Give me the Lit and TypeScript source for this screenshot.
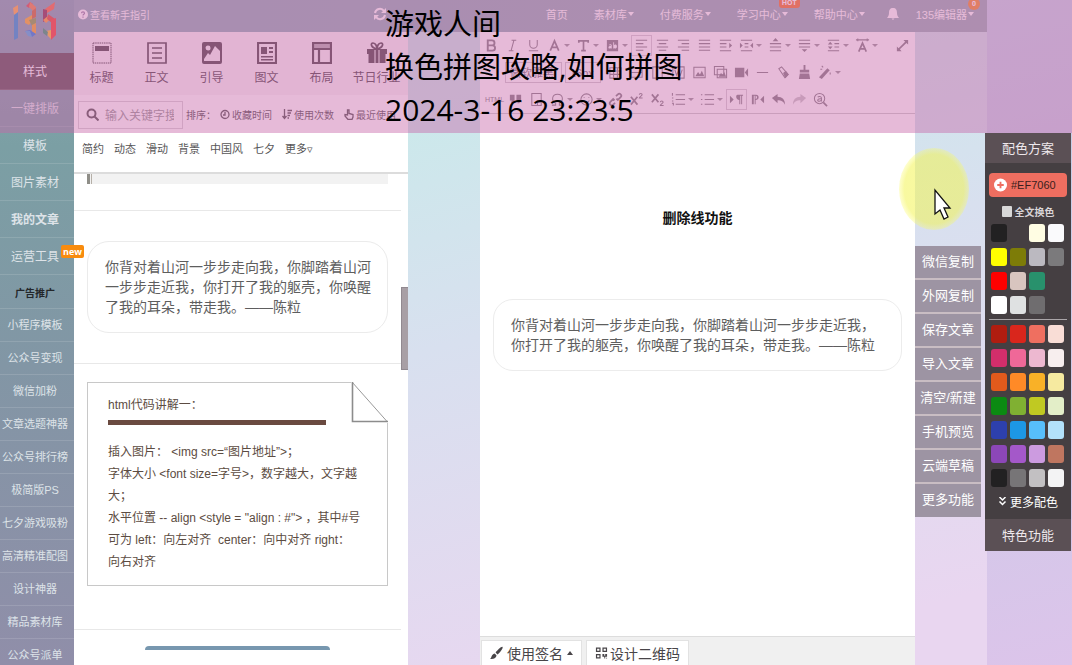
import { LitElement, html, svg, css, nothing } from "lit";
import { customElement, state } from "lit/decorators.js";
import { classMap } from "lit/directives/class-map.js";

const toolGlyphs: Record<string, unknown> = {
  bold: svg`<path d="M4 2.500h4.500a2.700 2.700 0 0 1 0 5.400H4zM4 7.900h5a2.800 2.800 0 0 1 0 5.600H4z" fill="none" stroke="currentColor" stroke-width="2"/>`,
  italic: svg`<path d="M7 2.500h5M4 13.500h5M9.500 2.500l-3 11" class="l"/>`,
  underline: svg`<path d="M4 2v5a4 4 0 0 0 8 0V2M3 13.500h10" class="l"/>`,
  color: svg`<path d="M3.500 13.500L8 3l4.500 10.500M5 10h6" class="l2"/>`,
  type: svg`<path d="M3 5V3h10v2M8 3v10.500M5.500 13.500h5" class="l2"/>`,
  mark: svg`<path fill-rule="evenodd" d="M2 2h12v12H2zM4.200 7v.8h2v.6c-1.500 0-2.500.4-2.500 1.600 0 1.500 2 1.600 2.600.7v.6h.9V8c0-1.600-2.500-1.600-3-.6zM8.800 4.500v6.700h.8v-.6c1 1.200 3.100.6 3.100-1.600s-2-2.600-3-1.500v-3z"/>`,
  left: svg`<path d="M2 2.500h12M2 6h8M2 9.500h12M2 13h8" class="l"/>`,
  center: svg`<path d="M2 2.500h12M4 6h8M2 9.500h12M4 13h8" class="l"/>`,
  right: svg`<path d="M2 2.500h12M6 6h8M2 9.500h12M6 13h8" class="l"/>`,
  justify: svg`<path d="M2 2.500h12M2 6h12M2 9.500h12M2 13h12" class="l"/>`,
  indent: svg`<path d="M2 2.500h12M2 6h7M2 9.500h7M2 13.500h12" class="l"/><path d="M12 5l3 3-3 3z"/>`,
  both: svg`<path d="M2 2.500h12M6 6h4M6 9.500h4M2 13.500h12" class="l"/><path d="M1 5l3 3-3 3zM15 5l-3 3 3 3z"/>`,
  top: svg`<path d="M2 6h12M2 9.500h12M2 13.500h12" class="l"/><path d="M8 0l3 3.500H5z"/>`,
  bottom: svg`<path d="M2 2.500h12M2 6h12M2 9.500h12" class="l"/><path d="M8 15l3-3H5z"/>`,
  height: svg`<path d="M2 2.500h12M9 6h5M9 9.500h5M2 13.500h12" class="l"/><path d="M4.500 4l2.500 3H2zM4.500 12L7 9H2z"/>`,
  spacing: svg`<path d="M1 2h14M3 .5v3M13 .5v3" class="l"/><path d="M4 14.500L8 5.500l4 9M5.500 11.500h5" class="l2"/>`,
  expand: svg`<path d="M9 2h5v5l-1.800-1.800L5.200 12 7 14H2V9l1.800 1.800L10.800 4z"/>`,
  table: svg`<path d="M2 3h12v11H2zM2 6.500h12M2 10h12M6 3v11M10 3v11" class="l"/>`,
  frame: svg`<path d="M2 3h12v10H2zM2 8h12" class="l"/>`,
  page: svg`<path d="M3 2h10v12H3z" class="l"/>`,
  word: svg`<path d="M2 2h12v12H2zM4 5l2 6 2-5 2 5 2-6" class="l"/>`,
  image: svg`<path d="M2 2.500h12v11H2z" class="l"/><path d="M3.500 12l3-4.500 2 2.500 2-4 2.500 6z"/>`,
  images: svg`<path d="M1.500 1.500h10v9h-10zM4.500 4.500h10v9h-10z" class="l"/><path d="M6 12.500l2.500-4 2 2 1.500-3 2 5z"/>`,
  video: svg`<path d="M1 3h10v10H1zM11.500 8L15 3.500v9z"/>`,
  rule: svg`<path d="M2 8h12" class="l"/>`,
  eraser: svg`<path d="M3 4l3-2 7 8-3.500 3.500z" class="l"/><path d="M7.500 8.500L10.500 6l3 4-3.500 4z"/>`,
  broom: svg`<path d="M7 0h2v5h4v3H3V5h4zM3 9h10l1 6H2z"/>`,
  wand: svg`<path d="M1 13l9-9.500 2.500 2L4 15z"/><path d="M4 1l1.500 1.500M2.500 4.500h2M13 8v2" class="l"/>`,
  quote: svg`<path d="M2 3h5v6l-2 3H3l1-3H2zM9 3h5v6l-2 3h-2l1-3H9z"/>`,
  file: svg`<path d="M3 1.500h10v13H3zM9 14.500V11h4" class="l"/>`,
  omega: svg`<path d="M2 14h4v-2C1 9 2 2.500 8 2.500s7 6.500 2 9.500v2h4" class="l"/>`,
  smile: svg`<circle cx="8" cy="8" r="6" class="l"/><path d="M5 9c1 3 5 3 6 0M5.500 5.500v1M10.500 5.500v1" class="l"/>`,
  link: svg`<path d="M7 9l-1.500-1.500-3 3a2 2 0 0 0 3 3l2-2M9 7l1.500 1.500 3-3a2 2 0 0 0-3-3l-2 2" class="l2"/>`,
  sup: svg`<path d="M2 5l7 8.500M9 5l-7 8.500" class="l2"/><path d="M11 3c0-2 3-2 3 0 0 1-3 2-3 3.500h3.500" class="l"/>`,
  sub: svg`<path d="M2 2.500L9 11M9 2.500L2 11" class="l2"/><path d="M11 11c0-2 3-2 3 0 0 1-3 2-3 3.500h3.500" class="l"/>`,
  ol: svg`<path d="M5 3h10M5 8h10M5 13h10M1.500 1v3M1 6.500h1.500M1 9.500h1.500M1 12h1.500v2.500" class="l"/>`,
  ul: svg`<path d="M5 3h10M5 8h10M5 13h10M1 3h1.500M1 8h1.500M1 13h1.500" class="l"/>`,
  ltr: svg`<path d="M1 4l4 4-4 4zM9 3h6v1h-1v9h-1V4h-1v9h-1V8.500C7 8.500 7 3 9 3z"/>`,
  rtl: svg`<path d="M15 4l-4 4 4 4z"/><path fill-rule="evenodd" d="M2 13V3h4.500a2.700 2.700 0 0 1 0 5.400H6V13H5V4H4v9zM6 4v3.400c2 0 2-3.400 0-3.400z"/>`,
  undo: svg`<path d="M1 6.500L7 2v3c5 0 8 3 8 8.500C13 10 11 8.800 7 8.800V12z"/>`,
  redo: svg`<path opacity=".45" d="M15 6.500L9 2v3c-5 0-8 3-8 8.500C3 10 5 8.800 9 8.800V12z"/>`,
  find: svg`<circle cx="7" cy="7" r="5.500" class="l"/><path d="M11 11l4 4" class="l2"/><path d="M5 5.500c1-1 4-1 4 1V10M9 7.200c-2-.2-4 .1-4 1.500 0 1.700 3 1.500 4-.2" class="l"/>`,
};

const panelGlyphs: Record<string, unknown> = {
  title: svg`<path d="M1 1h18v20H1z" fill="none" stroke="currentColor" stroke-dasharray="1.500 .7"/><path d="M3 4h14v5H3z"/>`,
  body: svg`<path d="M1 1h18v20H1zM5 6h10M5 11h10M5 16h10" fill="none" stroke="currentColor" stroke-width="1.700"/>`,
  guide: svg`<path fill-rule="evenodd" d="M2 0h16a2 2 0 0 1 2 2v18a2 2 0 0 1-2 2H2a2 2 0 0 1-2-2V2a2 2 0 0 1 2-2zm4 3.500a2.500 2.500 0 1 0 .1 5 2.500 2.500 0 0 0-.1-5zM2 19h16V9l-5-5-5 9-2-2-4 6z"/>`,
  mixed: svg`<path d="M1 1h18v20H1z" fill="none" stroke="currentColor" stroke-width="2.200"/><path d="M4 5h6v7H4zM12 5h4v2h-4zM12 9h4v2h-4zM4 14h12v1.500H4zM4 17h12v1.500H4z"/>`,
  layout: svg`<path d="M1 1h18v20H1zM1 7h18M7 7v14" fill="none" stroke="currentColor" stroke-width="2.200"/><path d="M1 1h18v5H1z" opacity=".4"/>`,
  gift: svg`<path d="M0 7h20v5h-1.500v9h-17v-9H0z"/><path d="M7.500 8h1v13h-1zM11.500 8h1v13h-1z" fill="#fff"/><path d="M10 7C4 6 3 1 6 1s4 4 4 6c0-2 1-6 4-6s2 5-4 6z" fill="none" stroke="currentColor" stroke-width="1.700"/>`,
};

interface Tool { icon: string; name: string; menu?: boolean; on?: boolean }
const t = (icon: string, name: string, menu = false, on = false): Tool => ({ icon, name, menu, on });

const rowOne: Tool[] = [
  t("bold", "加粗"), t("italic", "斜体"), t("underline", "下划线"), t("color", "字体颜色", true),
  t("type", "字体", true), t("mark", "背景色", true), t("left", "左对齐", false, true),
  t("center", "居中对齐"), t("right", "右对齐"), t("justify", "两端对齐"), t("indent", "首行缩进"),
  t("both", "两侧边距", true), t("top", "段前距", true), t("bottom", "段后距", true),
  t("height", "行间距", true), t("spacing", "字间距", true),
];
const rowTwo: Tool[] = [
  t("table", "表格"), t("frame", "边框"), t("page", "页面"), t("word", "Word"), t("image", "图片"),
  t("images", "多图上传"), t("video", "视频"), t("rule", "分隔线"), t("eraser", "清除格式"),
  t("broom", "格式刷"), t("wand", "自动排版", true),
];
const rowThree: Tool[] = [
  t("quote", "引用"), t("file", "文档"), t("omega", "特殊字符", true), t("smile", "表情", true),
  t("link", "链接"), t("sup", "上标"), t("sub", "下标"), t("ol", "有序列表", true),
  t("ul", "无序列表", true), t("ltr", "从左向右", false, true), t("rtl", "从右向左"),
  t("undo", "撤销"), t("redo", "重做"), t("find", "查找替换"),
];

@customElement("editor-toolbar")
export class EditorToolbar extends LitElement {
  static styles = css`
    :host { display: block; color: #858085; padding: 0 2px 0 1px; border-bottom: 1px solid #ccc; }
    .row { display: flex; align-items: center; height: 27px; }
    .row.second { padding-left: 24px; }
    .row.third { padding-left: 3px; }
    button { display: flex; align-items: center; flex: none; width: 21px; height: 21px; padding: 0 2px;
      border: 1px solid transparent; background: none; color: inherit; }
    button.menu { width: 29px; }
    button.menu::after { content: ""; margin-left: 2px; border: 3px solid transparent; border-top-color: currentColor; border-bottom: 0; opacity: .8; }
    button.on { border-color: #d6d0d6; }
    button.end { margin-left: auto; }
    button.code { font: 7px/21px "Liberation Sans", Arial, sans-serif; padding: 0; justify-content: center; }
    svg { display: block; flex: none; width: 15px; height: 15px; fill: currentColor; overflow: visible; }
    .l { fill: none; stroke: currentColor; stroke-width: 1.100; }
    .l2 { fill: none; stroke: currentColor; stroke-width: 1.800; }
    select { appearance: none; height: 21px; margin: 0 3px 0 0; padding: 0 4px; border: 1px solid #d0cad0; border-radius: 0;
      background: none; color: #7a767a; font: 11px "Liberation Sans", "Noto Sans CJK SC", sans-serif; }
    .family { width: 57px; }
    .size { width: 36px; margin-right: 4px; }
  `;
  private tool(x: Tool, extra = "") {
    return html`<button type="button" aria-label=${x.name}
      class=${classMap({ menu: !!x.menu, on: !!x.on, end: extra === "end" })}
      ><svg viewBox="0 0 16 16" aria-hidden="true">${toolGlyphs[x.icon]}</svg></button>`;
  }
  render() {
    return html`
      <div class="row">${rowOne.map((x) => this.tool(x))}${this.tool(t("expand", "全屏"), "end")}</div>
      <div class="row second">
        <select class="family" aria-label="字体"><option>微软雅黑</option></select>
        <select class="size" aria-label="字号"><option>16px</option></select>
        ${rowTwo.map((x) => this.tool(x))}
      </div>
      <div class="row third"><button type="button" class="code">HTML</button>${rowThree.map((x) => this.tool(x))}</div>`;
  }
}

const sideTop = ["样式", "一键排版", "模板", "图片素材", "我的文章", "运营工具"];
const sideMore = ["广告推广", "小程序模板", "公众号变现", "微信加粉", "文章选题神器", "公众号排行榜", "极简版PS",
  "七夕游戏吸粉", "高清精准配图", "设计神器", "精品素材库", "公众号派单"];

@customElement("side-menu")
export class SideMenu extends LitElement {
  static styles = css`
    :host { display: block; flex: 0 0 74px; width: 74px; min-width: 0; position: relative; z-index: 1;
      background: linear-gradient(#84a8b2, #7b9fa4 22%, #8296a5 55%, #908ea9); }
    .logo { display: block; height: 53px; }
    .logo svg { display: block; width: 74px; height: 53px; }
    nav { display: flex; flex-direction: column; }
    nav a { position: relative; box-sizing: border-box; flex: none; height: 37px; padding-right: 4px; border-bottom: 1px solid rgba(255,255,255,.13);
      color: #dde3e8; font-size: 12px; line-height: 38px; text-align: center; text-decoration: none; white-space: nowrap; }
    nav a.current { background: #5f5256; color: #fff; }
    nav a.strong { font-weight: 700; }
    nav a.small { height: 33px; font-size: 11px; line-height: 33px; }
    nav a.ad { height: 34px; color: #24272b; font-size: 10px; font-weight: 700; line-height: 38px; }
    .new { position: absolute; left: 61px; top: 7px; width: 23px; height: 13px; border-radius: 2px; background: #f88b0d;
      color: #fff; font: 700 9px/13px "Open Sans", sans-serif; }
  `;
  render() {
    return html`
      <a class="logo" href="#" aria-label="135编辑器"><svg viewBox="0 0 74 53">
        <path d="M13 8l5-3v8l-4 2z" fill="#ffb347"/><path d="M14 15l4-3v26l-4 2z" fill="#2f9bd8"/>
        <path d="M26 6l4-4 3 2-4 4z" fill="#d9534f"/><path d="M30 2l6 5v7l-4-4-3-3z" fill="#f08a4a"/>
        <path d="M32 11l4-3v9l-4 2z" fill="#d0703a"/><path d="M25 19l7-4v6l-3 4-4-2z" fill="#f7b52c"/>
        <path d="M29 20l7-2v5l-4 3z" fill="#8aa84a"/><path d="M32 25l4-2v11l-4-2z" fill="#f5ac2c"/>
        <path d="M25 31l5-1 6 4-4 3z" fill="#2f86e0"/><path d="M25 31l3 5 4 1-2-6z" fill="#4fb0e0"/>
        <path d="M45 9l10-7-1 7-7 4z" fill="#fa6f42"/><path d="M43 9l4 1v10l-4 2z" fill="#8a3a50"/>
        <path d="M43 20l5-4 4 2-6 5z" fill="#ffa23a"/><path d="M48 14l7 5-3 4-5-4z" fill="#e0503a"/>
        <path d="M51 20l5-2v17l-5 5z" fill="#f84838"/><path d="M46 31l5-1v9l-3-3z" fill="#ffc238"/>
        <path d="M43 28l5 4-1 4-4-3z" fill="#3f9f75"/>
      </svg></a>
      <nav>
        ${sideTop.map((s, i) => html`<a href="#" class=${classMap({ current: i === 0, strong: i === 4 })}
          >${s}${i === 5 ? html`<span class="new">new</span>` : nothing}</a>`)}
        ${sideMore.map((s, i) => html`<a href="#" class=${classMap({ small: true, ad: i === 0 })}>${s}</a>`)}
      </nav>`;
  }
}

@customElement("style-panel")
export class StylePanel extends LitElement {
  static styles = css`
    :host { display: flex; flex-direction: column; flex: 0 0 334px; min-width: 0; min-height: 0; background: #fff; color: #575657; }
    a { color: inherit; text-decoration: none; }
    .kinds { display: flex; height: 63px; box-sizing: border-box; padding: 10px 0 0; background: #f7f4f6; overflow: hidden; }
    .kinds a { flex: 0 0 55px; display: flex; flex-direction: column; align-items: center; color: #50484e; font-size: 12px; line-height: 16px; white-space: nowrap; }
    .kinds svg { width: 20px; height: 22px; margin-bottom: 6px; fill: currentColor; }
    .search { display: flex; align-items: center; height: 38px; box-sizing: border-box; padding: 1px 4px 0; font-size: 10px; white-space: nowrap; overflow: hidden; }
    .search > * { flex: none; }
    .field { display: flex; align-items: center; box-sizing: border-box; width: 105px; height: 28px; padding: 0 8px 0 7px; border: 1px solid #d8d4d8; }
    .field svg { flex: none; width: 13px; height: 13px; margin-right: 6px; }
    input { flex: 1; min-width: 0; padding: 0; border: 0; outline: 0; background: none; font: 12px "Noto Sans CJK SC", sans-serif; color: #555; }
    input::placeholder { color: #999; opacity: 1; }
    .search > span { margin: 0 2px 0 3px; font-size: 10px; width: 32px; }
    .search > a { display: flex; align-items: center; gap: 2px; margin-right: 10px; }
    .search > a svg { width: 10px; height: 11px; }
    .o { fill: none; stroke: currentColor; stroke-width: 1.300; }
    .tabs { display: flex; gap: 10px; height: 41px; box-sizing: border-box; padding: 0 8px; border-bottom: 2px solid #dcdcdc; font-size: 11px; line-height: 33px; white-space: nowrap; }
    .list { flex: 1; min-height: 0; display: flex; overflow: hidden; }
    .items { flex: 1; min-width: 0; overflow: hidden; }
    .item { border-bottom: 1px solid #e8e8e8; padding: 0 13px; }
    .first { height: 36px; }
    .strip { height: 10px; background: #f2f2f2; border-left: 3px solid #8f8e88; width: 298px; }
    .strip::before { content: ""; display: block; width: 1px; height: 10px; margin-left: 1px; background: #b6b0a8; }
    .second { padding-top: 30px; padding-bottom: 30px; }
    .bubble { margin: 0; box-sizing: border-box; width: 301px; padding: 15px 15px 15px 17px; border: 1px solid #ebebeb; border-radius: 22px;
      color: #5e5e5e; font-size: 14px; line-height: 20px; }
    .third { padding-top: 18px; padding-bottom: 43px; }
    .note { position: relative; box-sizing: border-box; width: 301px; height: 204px; padding: 11px 20px 0; border: 1px solid #c8c8c8;
      color: #5c4c42; font: 12px/22px "Liberation Sans", "Noto Sans CJK SC", sans-serif; }
    .fold { position: absolute; right: -1px; top: -1px; width: 37px; height: 41px; background: #fff; }
    .note h3 { margin: 0; height: 26px; border-bottom: 5px solid #6a4a40; width: 218px; font: inherit; }
    .note p { margin: 0; padding-top: 16px; white-space: pre; }
    .last { height: 40px; padding: 16px 71px; border: 0; }
    .cap { height: 4px; border-radius: 4px 4px 0 0; background: #7797af; }
    .track { flex: 0 0 7px; }
    .thumb { height: 83px; margin-top: 113px; background: #a89fa5; border: 1px solid #918990; border-right: 0; box-sizing: border-box; }
  `;
  render() {
    const kinds = [["title", "标题"], ["body", "正文"], ["guide", "引导"], ["mixed", "图文"], ["layout", "布局"], ["gift", "节日行业"]];
    return html`
      <nav class="kinds">${kinds.map(([k, n]) => html`<a href="#"><svg viewBox="0 0 20 22">${panelGlyphs[k]}</svg>${n}</a>`)}</nav>
      <div class="search">
        <label class="field"><svg viewBox="0 0 13 13" fill="none" stroke="currentColor" stroke-width="2"><circle cx="5.500" cy="5.500" r="4"/><path d="M8.500 8.500l4 4"/></svg>
          <input type="text" aria-label="搜索" placeholder="输入关键字搜索"></label>
        <span>排序：</span>
        <a href="#"><svg viewBox="0 0 10 11"><circle cx="5" cy="5.500" r="4" class="o"/><path d="M5 3v3H3" class="o"/></svg>收藏时间</a>
        <a href="#"><svg viewBox="0 0 10 11"><path d="M2.500 0v9M.5 7l2 2.500 2-2.500M5.500 1.500H10M5.500 4H9M5.500 6.500H8M5.500 9H7" class="o"/></svg>使用次数</a>
        <a href="#"><svg viewBox="0 0 10 11"><path d="M3.500 6V1h1.500v3.500l4 1V8L8 10.500H4L1 7V5.500z" class="o"/></svg>最近使用</a>
      </div>
      <nav class="tabs">${["简约", "动态", "滑动", "背景", "中国风", "七夕", "更多▿"].map((n) => html`<a href="#">${n}</a>`)}</nav>
      <div class="list">
        <div class="items">
          <div class="item first"><div class="strip"></div></div>
          <div class="item second"><p class="bubble">你背对着山河一步步走向我，你脚踏着山河<br>一步步走近我，你打开了我的躯壳，你唤醒<br>了我的耳朵，带走我。——陈粒</p></div>
          <div class="item third"><div class="note">
            <svg class="fold" viewBox="0 0 37 41" fill="none"><path d="M1 0L36.500 40" stroke="#999"/><path d="M1.500 0v39.500H37" stroke="#8c8c8c" stroke-width="1.600"/></svg>
            <h3>html代码讲解一：</h3>
            <p>插入图片： &lt;img src=“图片地址”&gt;；
字体大小 &lt;font size=字号&gt;，数字越大，文字越
大；
水平位置 -- align &lt;style = "align : #"&gt; ，其中#号
可为 left：向左对齐  center：向中对齐 right：
向右对齐</p></div></div>
          <div class="item last"><div class="cap"></div></div>
        </div>
        <div class="track"><div class="thumb"></div></div>
      </div>`;
  }
}

const recent = ["#222122", "", "#fffde3", "#fafafc", "#ffff00", "#7d7c08", "#bbb9c0", "#7b7a7c", "#ff0000", "#d8c5bf", "#28916c", "",
  "#ffffff", "#dfe1e2", "#6f6d6f"];
const scheme = ["#b01d10", "#d9261c", "#ef6f60", "#f9ddd6", "#d22e6b", "#ef6898", "#edb8d0", "#f7eeee", "#e25a1c", "#ff8a27", "#f9b127", "#f6eaa0",
  "#0b8a12", "#80b032", "#c0c922", "#e3eec8", "#2d40ad", "#1d97e5", "#57bffc", "#b3e1fa", "#8c47b8", "#a458c9", "#cc9be0", "#bf7660",
  "#222122", "#777577", "#c2c0c2", "#f3f3f4"];

@customElement("color-palette")
export class ColorPalette extends LitElement {
  @state() private picked = "#EF7060";
  static styles = css`
    :host { display: block; background: #453f42; color: #f1eef0; }
    .bar { display: block; box-sizing: border-box; width: 100%; padding: 0; border: 0; background: #5b5055; color: #eee8ec;
      font: 13px/30px "Noto Sans CJK SC", sans-serif; text-align: center; height: 30px; margin: 0; }
    .bar.foot { height: 32px; line-height: 32px; }
    .body { padding: 10px 4px 0; }
    .hex { display: flex; align-items: center; gap: 4px; box-sizing: border-box; width: 100%; height: 24px; padding: 0 5px; border: 0; border-radius: 4px; background: #ee6e60;
      color: #3a1e1c; font: 11px "Liberation Sans", Arial, sans-serif; }
    .hex svg { width: 13px; height: 14px; }
    .all { display: flex; align-items: center; justify-content: center; gap: 3px; height: 27px; padding: 1px 0 0; box-sizing: border-box; font-size: 10px; font-weight: 700; color: #d9d5d8; }
    .all input { appearance: none; width: 10px; height: 11px; margin: 0; background: #d8d8d8; border-radius: 1px; }
    .grid { display: grid; grid-template-columns: repeat(4, 16px); gap: 6px 3px; padding: 0 2px; }
    .grid.recent { padding-bottom: 5px; border-bottom: 1px solid #aaa5a8; margin-bottom: 5px; }
    .sw { height: 18px; padding: 0; border: 0; border-radius: 3px; }
    .more { display: flex; align-items: center; justify-content: center; gap: 3px; box-sizing: border-box; height: 32px; padding-bottom: 3px; color: #fff; font-size: 12px; text-decoration: none; }
    .more svg { width: 9px; height: 9px; fill: none; stroke: currentColor; stroke-width: 1.500; }
  `;
  private swatch(c: string) {
    return c ? html`<button type="button" class="sw" aria-label=${c} style="background:${c}" @click=${() => (this.picked = c.toUpperCase())}></button>` : html`<span></span>`;
  }
  render() {
    return html`
      <h2 class="bar">配色方案</h2>
      <div class="body">
        <button type="button" class="hex"><svg viewBox="0 0 14 14"><circle cx="7" cy="7" r="7" fill="#fff"/><path d="M7 3.500v7M3.500 7h7" stroke="#ee6e60" stroke-width="2"/></svg>${this.picked}</button>
        <label class="all"><input type="checkbox">全文换色</label>
        <div class="grid recent">${recent.map((c) => this.swatch(c))}</div>
        <div class="grid">${scheme.map((c) => this.swatch(c))}</div>
        <a class="more" href="#"><svg viewBox="0 0 9 9"><path d="M1.500 0l3 3 3-3M1.500 4.500l3 3 3-3"/></svg>更多配色</a>
      </div>
      <button type="button" class="bar foot">特色功能</button>`;
  }
}

@customElement("app-root")
export class AppRoot extends LitElement {
  static styles = css`
    :host { display: block; font-family: "Liberation Sans", "Noto Sans CJK SC", sans-serif; }
    a { color: inherit; text-decoration: none; }
    .app { position: relative; display: flex; height: 100vh; overflow: hidden; background: linear-gradient(165deg, #c5e4ec, #c6cfe8 45%, #dcc4ea); }
    .work { flex: 1; min-width: 0; display: flex; background: linear-gradient(165deg, #c9eaea 20%, #d8e0ef 50%, #e9d6f0 92%); }
    .main { flex: 1; min-width: 0; display: flex; flex-direction: column; }
    .top { display: flex; align-items: center; flex: none; height: 32px; padding: 0 13px 4px 4px; box-sizing: border-box;
      background: linear-gradient(90deg, #8fafb9, #99afb6); color: #fff; font-size: 11px; white-space: nowrap; }
    .help { display: flex; align-items: center; gap: 2px; font-size: 10px; flex: 0 0 295px; }
    .help svg { width: 10px; height: 11px; }
    .sync { width: 14px; height: 14px; }
    .nav { display: flex; gap: 26px; margin-left: auto; }
    .account { display: flex; align-items: center; gap: 17px; margin-left: 22px; }
    .account svg { width: 12px; height: 12px; }
    .drop { position: relative; display: flex; align-items: center; gap: 1px; }
    .drop::after { content: ""; border: 3px solid transparent; border-top: 4px solid currentColor; border-bottom: 0; }
    .badge { position: absolute; right: -12px; top: -8px; padding: 0 3px; border-radius: 3px; background: #f5792f; color: #fff; font: 700 7px/10px "Open Sans", sans-serif; }
    .dot { right: -6px; top: -8px; border-radius: 6px; line-height: 12px; padding: 0 4px; background: #f5922f; }
    .body { flex: 1; min-height: 0; display: flex; }
    .editor { flex: 1; min-width: 0; display: flex; flex-direction: column; margin-left: 72px; background: #fff; }
    .doc { flex: 1; min-height: 0; padding: 93px 13px 0; color: #5e5e5e; font-size: 14px; line-height: 20px; overflow: hidden; }
    .doc h1 { margin: 0 0 70px; color: #111; font-size: 14px; line-height: 22px; text-align: center; }
    .quote { margin: 0; padding: 15px 17px; border: 1px solid #ececec; border-radius: 20px; }
    .foot { display: flex; gap: 4px; flex: none; box-sizing: border-box; height: 29px; padding: 3px 1px 0; border-top: 1px solid #ddd; background: #f0f0f0; }
    .foot button { display: flex; align-items: center; gap: 4px; padding: 0 8px; border: 1px solid #e2e2e2; border-bottom: 0; background: #fff; color: #484548; font: 14px/24px "Noto Sans CJK SC", sans-serif; white-space: nowrap; }
    .foot svg { width: 13px; height: 14px; fill: currentColor; }
    .up { border: 3px solid transparent; border-bottom: 4px solid currentColor; border-top: 0; }
    .foot button + button { gap: 2px; }
    .actions { flex: 0 0 72px; padding-top: 214px; box-sizing: border-box; }
    .actions button { display: block; width: 66px; height: 34px; padding: 0; border: 0; border-bottom: 2px solid #c9bdc3; background: #9d94a3; color: #fff;
      font: 13px/32px "Liberation Sans", "Noto Sans CJK SC", sans-serif; white-space: nowrap; }
    .actions button:last-child { border-bottom-color: #9d94a3; height: 33px; }
    .rail { flex: 0 0 85px; }
    .rail color-palette { margin: 133px 1px 0 -2px; position: relative; }
    .caption { position: absolute; inset: 0 0 auto 0; height: 133px; box-sizing: border-box; padding: 2px 0 0 385px; background: rgba(200, 102, 169, .45);
      color: #000; font: 29px/43px "Open Sans", "Noto Sans CJK SC", sans-serif; pointer-events: none; white-space: nowrap; z-index: 3; }
    .caption p { margin: 0; height: 43px; }
    .caption .time { font-size: 30px; }
    .pointer { position: absolute; left: 898px; top: 147px; width: 72px; height: 84px; z-index: 4; pointer-events: none; }
  `;
  render() {
    return html`<div class="app">
      <div class="work">
        <side-menu></side-menu>
        <div class="main">
          <header class="top">
            <a class="help" href="#"><svg viewBox="0 0 10 11"><circle cx="5" cy="5.500" r="5" fill="#fff"/><path d="M3.500 4.300c0-2 3-2 3 0 0 1-1.500 1-1.500 2.200M5 7.500v1.200" fill="none" stroke="#9a86a8" stroke-width="1.200"/></svg>查看新手指引</a>
            <svg class="sync" viewBox="0 0 14 14" fill="none" stroke="#fff" stroke-width="2"><path d="M2 6a5 5 0 0 1 9-2M12 8a5 5 0 0 1-9 2"/><path d="M13 1v5H8zM1 13V8h5z" fill="#fff" stroke="none"/></svg>
            <nav class="nav">
              <a href="#">首页</a><a class="drop" href="#">素材库</a><a class="drop" href="#">付费服务</a>
              <a class="drop" href="#">学习中心<span class="badge">HOT</span></a><a class="drop" href="#">帮助中心</a>
            </nav>
            <div class="account">
              <svg viewBox="0 0 12 12" fill="#fff" role="img" aria-label="消息"><path d="M6 0c3 0 4 2 4 5 0 2 .5 3 2 5H0c1.500-2 2-3 2-5 0-3 1-5 4-5zM4.500 10.500h3L6 12z"/></svg>
              <a class="drop" href="#">135编辑器<span class="badge dot">0</span></a>
            </div>
          </header>
          <div class="body">
            <style-panel></style-panel>
            <section class="editor">
              <editor-toolbar></editor-toolbar>
              <article class="doc">
                <h1>删除线功能</h1>
                <p class="quote">你背对着山河一步步走向我，你脚踏着山河一步步走近我，<br>你打开了我的躯壳，你唤醒了我的耳朵，带走我。——陈粒</p>
              </article>
              <footer class="foot">
                <button type="button"><svg viewBox="0 0 14 14"><path d="M13.500.5c1 1-3 6.500-5.500 8L6 6.500C8 4 12.500-.5 13.500.5zM5 7.500L7 9.500c0 3-3 4.500-7 4 2-1 1-5 5-6z"/></svg>使用签名<span class="up"></span></button>
                <button type="button"><svg viewBox="0 0 14 14"><path fill-rule="evenodd" d="M1 1h5v5H1zm1.300 1.300v2.400h2.400V2.300zM8 1h5v5H8zm1.300 1.300v2.400h2.400V2.300zM1 8h5v5H1zm1.300 1.300v2.400h2.400V9.300zM8 8h2v2h1V8h2v3h-2v2h-1v-2H8zM12 12h1v1h-1z"/></svg>设计二维码</button>
              </footer>
            </section>
            <div class="actions">${["微信复制", "外网复制", "保存文章", "导入文章", "清空/新建", "手机预览", "云端草稿", "更多功能"].map((n) => html`<button type="button">${n}</button>`)}</div>
          </div>
        </div>
      </div>
      <aside class="rail"><color-palette></color-palette></aside>
      <div class="caption"><p>游戏人间</p><p>换色拼图攻略,如何拼图</p><p class="time">2024-3-16 23:23:5</p></div>
      <svg class="pointer" viewBox="0 0 72 84" aria-hidden="true">
        <defs><radialGradient id="glow"><stop offset=".85" stop-color="#f3f452" stop-opacity=".55"/><stop offset="1" stop-color="#fbfb60" stop-opacity=".3"/></radialGradient></defs>
        <ellipse cx="36" cy="42" rx="35" ry="41" fill="url(#glow)"/>
        <path d="M37 43v24l5-4 4 9 4-2-4-9h6z" fill="#fff" stroke="#111" stroke-width="1.300"/>
      </svg>
    </div>`;
  }
}
